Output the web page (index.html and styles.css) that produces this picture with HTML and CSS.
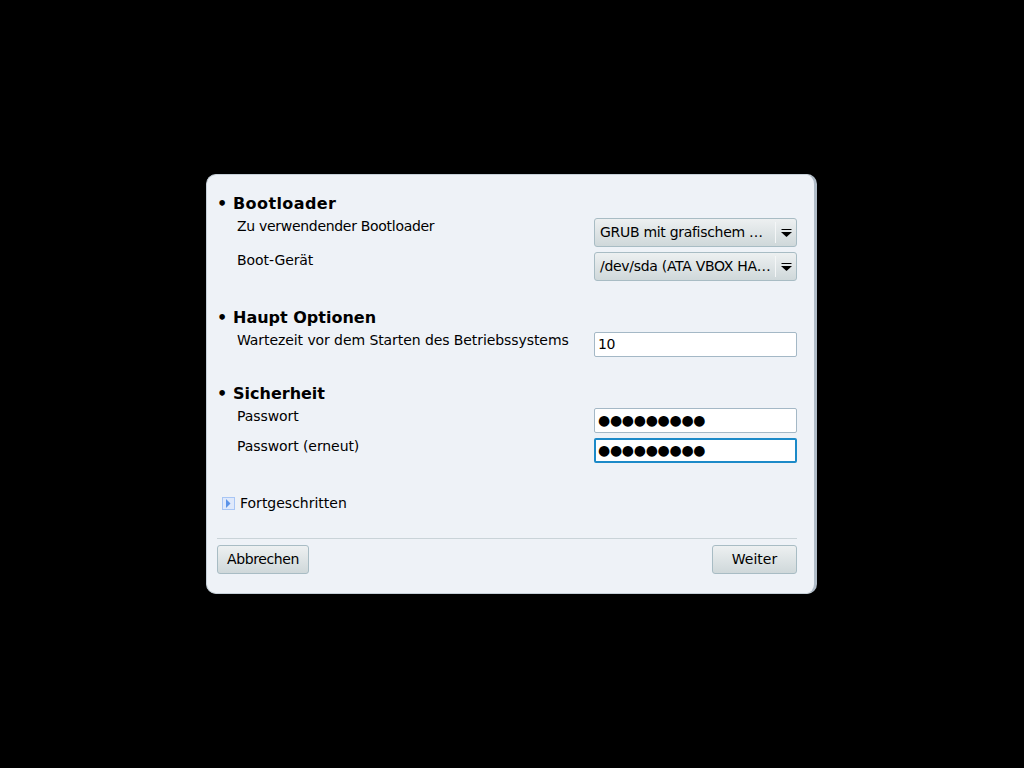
FILE: index.html
```html
<!DOCTYPE html>
<html lang="de">
<head>
  <meta charset="UTF-8" />
  <title>Bootloader</title>
  <link rel="stylesheet" href="styles.css">
</head>
<body>
  <div class="panel">
    <div class="section">
      <h2><span class="bullet">•</span><span class="wide">Bootloader</span></h2>
      <div class="row">
        <span class="label tight">Zu verwendender Bootloader</span>
        <div class="combo">
          <span class="combo-text">GRUB mit grafischem …</span>
          <span class="combo-arrow"><svg width="11" height="8" viewBox="0 0 11 8"><rect x="0.5" y="0" width="10" height="1" fill="#000"/><path d="M0 3h11L5.5 8z" fill="#000"/></svg></span>
        </div>
      </div>
      <div class="row">
        <span class="label">Boot-Gerät</span>
        <div class="combo">
          <span class="combo-text">/dev/sda (ATA VBOX HA…</span>
          <span class="combo-arrow"><svg width="11" height="8" viewBox="0 0 11 8"><rect x="0.5" y="0" width="10" height="1" fill="#000"/><path d="M0 3h11L5.5 8z" fill="#000"/></svg></span>
        </div>
      </div>
    </div>

    <div class="section">
      <h2><span class="bullet">•</span>Haupt Optionen</h2>
      <div class="row">
        <span class="label">Wartezeit vor dem Starten des Betriebssystems</span>
        <div class="entry number">10</div>
      </div>
    </div>

    <div class="section">
      <h2><span class="bullet">•</span>Sicherheit</h2>
      <div class="row">
        <span class="label">Passwort</span>
        <div class="entry dots">●●●●●●●●●</div>
      </div>
      <div class="row">
        <span class="label">Passwort (erneut)</span>
        <div class="entry dots focused">●●●●●●●●●</div>
      </div>
    </div>

    <div class="expander">
      <svg width="13" height="13" viewBox="0 0 13 13"><rect x="0.5" y="0.5" width="12" height="12" fill="#dfe9fb" stroke="#a8c6f5"/><path d="M4 2v9l4.5-4.5z" fill="#5b93e8"/></svg>
      <span>Fortgeschritten</span>
    </div>

    <div class="buttons">
      <button class="btn cancel">Abbrechen</button>
      <button class="btn next">Weiter</button>
    </div>
  </div>
</body>
</html>
```

FILE: styles.css
```css
* {
  box-sizing: border-box;
  margin: 0;
  padding: 0;
}
body {
  background-color: #000;
  height: 768px;
  overflow: hidden;
  padding: 174px 0 0 206px;
  font-family: "DejaVu Sans", sans-serif;
  font-size: 14px;
  line-height: 17px;
  color: #000;
}
.panel {
  width: 611px;
  height: 420px;
  background-color: #eef2f7;
  border: 1px solid #c6d0d8;
  border-right: 3px solid #b0bcc8;
  border-radius: 10px;
  padding: 18px 17px 0 10px;
}
.section {
  margin-bottom: 26px;
}
h2 {
  display: flex;
  padding-top: 1px;
  font-size: 16px;
  line-height: 20px;
  font-weight: bold;
  margin-bottom: 4px;
}
.bullet {
  width: 16px;
}
.wide {
  letter-spacing: 0.4px;
}
.row {
  display: flex;
  justify-content: space-between;
  margin-bottom: 5px;
  padding-left: 20px;
}
.row:last-child {
  margin-bottom: 0;
}
.label {
  letter-spacing: -0.08px;
}
.tight {
  letter-spacing: -0.3px;
}
.combo {
  display: flex;
  align-items: center;
  width: 203px;
  height: 29px;
  border: 1px solid #a8bcc4;
  border-radius: 3px;
  background: linear-gradient(#edf0f1, #cfd8da);
}
.combo-text {
  flex: 1;
  padding-left: 5px;
  white-space: nowrap;
  letter-spacing: -0.3px;
}
.combo-arrow {
  display: flex;
  align-items: center;
  justify-content: center;
  width: 21px;
  height: 21px;
  border-left: 1px solid #f4f6f7;
}
.entry {
  width: 203px;
  height: 25px;
  padding: 3px 0 0 3px;
  background-color: #fff;
  border: 1px solid #a4b8c6;
  border-radius: 2px;
}
.number {
  letter-spacing: -0.5px;
}
.dots {
  letter-spacing: -0.3px;
}
.focused {
  border: 2px solid #1c8ac8;
  padding: 2px 0 0 2px;
}
.expander {
  display: flex;
  align-items: center;
  gap: 5px;
  margin-top: 32px;
  padding-left: 5px;
}
.buttons {
  display: flex;
  justify-content: space-between;
  margin-top: 26px;
  padding-top: 6px;
  border-top: 1px solid #c9d3d8;
}
.btn {
  height: 29px;
  padding-bottom: 2px;
  font-family: inherit;
  font-size: 14px;
  color: #000;
  border: 1px solid #a8bcc4;
  border-radius: 3px;
  background: linear-gradient(#edf0f1, #cfd8da);
}
.cancel {
  width: 92px;
  letter-spacing: -0.4px;
}
.next {
  width: 85px;
}
```
